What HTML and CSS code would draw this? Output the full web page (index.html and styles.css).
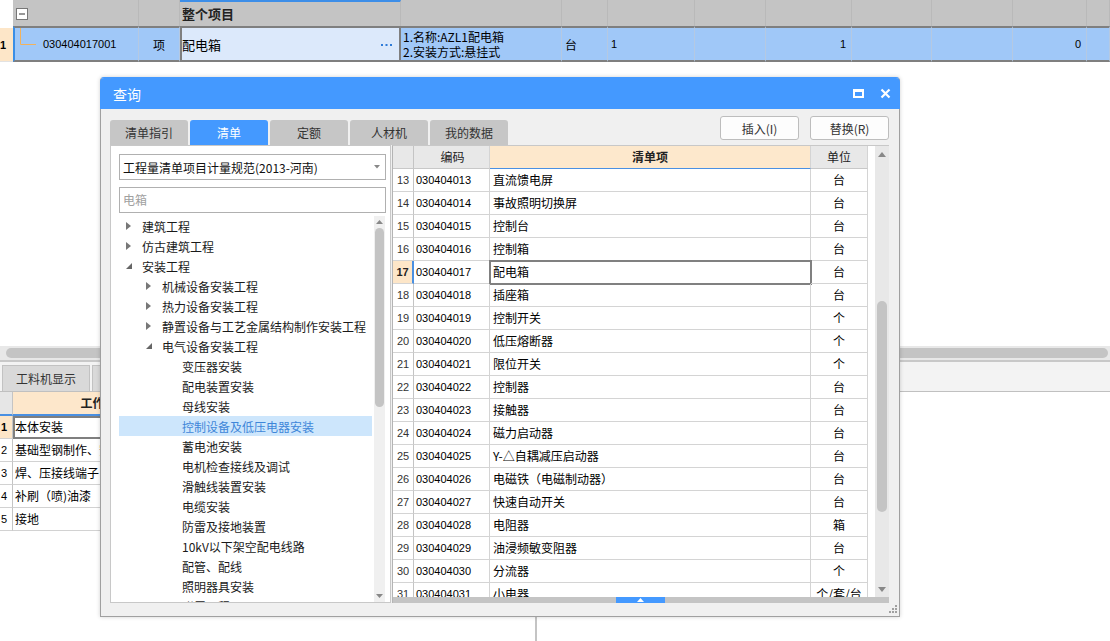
FILE: index.html
```html
<!DOCTYPE html>
<html lang="zh-CN">
<head>
<meta charset="utf-8">
<title>查询</title>
<link rel="stylesheet" href="styles.css">
</head>
<body>
<div class="app">
  <section class="top-grid">
    <div class="tg-row tg-head">
      <div class="tc tc-blank"></div>
      <div class="tc tc-tog"><svg class="minus" width="12" height="12" viewBox="0 0 12 12"><rect x="0.5" y="0.5" width="11" height="11" fill="#fff" stroke="#777"/><rect x="3" y="5.5" width="6" height="1" fill="#333"/></svg></div>
      <div class="tc"></div>
      <div class="tc tc-title">整个项目</div>
      <div class="tc"></div>
      <div class="tc"></div>
      <div class="tc"></div>
      <div class="tc"></div>
      <div class="tc"></div>
      <div class="tc"></div>
      <div class="tc"></div>
      <div class="tc"></div>
      <div class="tc"></div>
    </div>
    <div class="tg-row tg-item">
      <div class="tc ti-num">1</div>
      <div class="tc ti-code"><svg class="tree-line" width="16" height="17" viewBox="0 0 16 17"><path d="M0.5 0V16.5H16" fill="none" stroke="#f2b25c" stroke-width="1"/></svg><span class="mono">030404017001</span></div>
      <div class="tc ti-unit">项</div>
      <div class="tc ti-name"><span>配电箱</span><svg class="dots" width="11" height="3" viewBox="0 0 11 3"><rect x="0" y="0" width="2" height="2" fill="#2e7bd8"/><rect x="4.5" y="0" width="2" height="2" fill="#2e7bd8"/><rect x="9" y="0" width="2" height="2" fill="#2e7bd8"/></svg></div>
      <div class="tc ti-feat"><span>1.名称:AZL1配电箱</span><span>2.安装方式:悬挂式</span></div>
      <div class="tc ti-txt">台</div>
      <div class="tc ti-txt mono">1</div>
      <div class="tc"></div>
      <div class="tc ti-r mono">1</div>
      <div class="tc"></div>
      <div class="tc"></div>
      <div class="tc ti-r mono">0</div>
      <div class="tc"></div>
    </div>
    <div class="tg-space"></div>
    <div class="hscroll"><div class="hthumb"></div></div>
  </section>

  <section class="bottom">
    <div class="btabs">
      <div class="btab">工料机显示</div>
      <div class="btab">单价构成</div>
    </div>
    <div class="bsplit">
      <div class="bgrid">
        <div class="bg-row bg-head">
          <div class="bc bc-num"></div>
          <div class="bc bc-title">工作内容</div>
          <div class="bc"></div>
        </div>
        <div class="bg-row">
          <div class="bc bc-num sel">1</div>
          <div class="bc bc-sel">本体安装</div>
          <div class="bc"></div>
        </div>
        <div class="bg-row">
          <div class="bc bc-num">2</div>
          <div class="bc">基础型钢制作、安装</div>
          <div class="bc"></div>
        </div>
        <div class="bg-row">
          <div class="bc bc-num">3</div>
          <div class="bc">焊、压接线端子</div>
          <div class="bc"></div>
        </div>
        <div class="bg-row">
          <div class="bc bc-num">4</div>
          <div class="bc">补刷（喷)油漆</div>
          <div class="bc"></div>
        </div>
        <div class="bg-row">
          <div class="bc bc-num">5</div>
          <div class="bc">接地</div>
          <div class="bc"></div>
        </div>
      </div>
      <div class="bsplitter"></div>
      <div class="bright"></div>
    </div>
  </section>

  <div class="dialog">
    <div class="dlg-title">
      <span class="dlg-name">查询</span>
      <div class="dlg-ctrls">
        <svg width="11" height="9" viewBox="0 0 11 9"><rect x="1" y="1" width="9" height="7" fill="none" stroke="#fff" stroke-width="2"/><rect x="0" y="0" width="11" height="3" fill="#fff"/></svg>
        <svg width="11" height="11" viewBox="0 0 11 11"><path d="M1.5 1.5L9.5 9.5M9.5 1.5L1.5 9.5" stroke="#fff" stroke-width="2.2"/></svg>
      </div>
    </div>
    <div class="dlg-body">
      <div class="dlg-toolbar">
        <div class="tabs">
          <div class="tab">清单指引</div>
          <div class="tab active">清单</div>
          <div class="tab">定额</div>
          <div class="tab">人材机</div>
          <div class="tab">我的数据</div>
        </div>
        <div class="btns">
          <button class="btn">插入(I)</button>
          <button class="btn">替换(R)</button>
        </div>
      </div>
      <div class="dlg-content">
        <div class="lpanel">
          <div class="select"><span>工程量清单项目计量规范(2013-河南)</span><svg width="6" height="4" viewBox="0 0 6 4"><path d="M0 0H6L3 3.5Z" fill="#888"/></svg></div>
          <div class="search">电箱</div>
          <div class="tree-wrap">
            <ul class="tree">
              <li class="l0"><span class="arr"><svg width="5" height="8" viewBox="0 0 5 8"><path d="M0 0L5 4L0 8Z" fill="#777"/></svg></span>建筑工程</li>
              <li class="l0"><span class="arr"><svg width="5" height="8" viewBox="0 0 5 8"><path d="M0 0L5 4L0 8Z" fill="#777"/></svg></span>仿古建筑工程</li>
              <li class="l0"><span class="arr"><svg width="6" height="6" viewBox="0 0 6 6"><path d="M6 0V6H0Z" fill="#666"/></svg></span>安装工程</li>
              <li class="l1"><span class="arr"><svg width="5" height="8" viewBox="0 0 5 8"><path d="M0 0L5 4L0 8Z" fill="#777"/></svg></span>机械设备安装工程</li>
              <li class="l1"><span class="arr"><svg width="5" height="8" viewBox="0 0 5 8"><path d="M0 0L5 4L0 8Z" fill="#777"/></svg></span>热力设备安装工程</li>
              <li class="l1"><span class="arr"><svg width="5" height="8" viewBox="0 0 5 8"><path d="M0 0L5 4L0 8Z" fill="#777"/></svg></span>静置设备与工艺金属结构制作安装工程</li>
              <li class="l1"><span class="arr"><svg width="6" height="6" viewBox="0 0 6 6"><path d="M6 0V6H0Z" fill="#666"/></svg></span>电气设备安装工程</li>
              <li class="l2"><span class="arr"></span>变压器安装</li>
              <li class="l2"><span class="arr"></span>配电装置安装</li>
              <li class="l2"><span class="arr"></span>母线安装</li>
              <li class="l2 hl"><span class="arr"></span>控制设备及低压电器安装</li>
              <li class="l2"><span class="arr"></span>蓄电池安装</li>
              <li class="l2"><span class="arr"></span>电机检查接线及调试</li>
              <li class="l2"><span class="arr"></span>滑触线装置安装</li>
              <li class="l2"><span class="arr"></span>电缆安装</li>
              <li class="l2"><span class="arr"></span>防雷及接地装置</li>
              <li class="l2"><span class="arr"></span>10kV以下架空配电线路</li>
              <li class="l2"><span class="arr"></span>配管、配线</li>
              <li class="l2"><span class="arr"></span>照明器具安装</li>
              <li class="l2"><span class="arr"></span>附属工程</li>
            </ul>
            <div class="vscroll tree-scroll">
              <div class="sarrow"><svg width="7" height="4" viewBox="0 0 7 4"><path d="M0 4L3.5 0L7 4Z" fill="#888"/></svg></div>
              <div class="sthumb"></div>
              <div class="sfill"></div>
              <div class="sarrow"><svg width="7" height="4" viewBox="0 0 7 4"><path d="M0 0H7L3.5 4Z" fill="#888"/></svg></div>
            </div>
          </div>
        </div>
        <div class="rpanel">
          <div class="table-area">
            <div class="tbl">
              <div class="tr th">
                <div class="td n"></div>
                <div class="td c">编码</div>
                <div class="td nm">清单项</div>
                <div class="td u">单位</div>
              </div>
              <div class="tr"><div class="td n">13</div><div class="td c">030404013</div><div class="td nm">直流馈电屏</div><div class="td u">台</div></div>
              <div class="tr"><div class="td n">14</div><div class="td c">030404014</div><div class="td nm">事故照明切换屏</div><div class="td u">台</div></div>
              <div class="tr"><div class="td n">15</div><div class="td c">030404015</div><div class="td nm">控制台</div><div class="td u">台</div></div>
              <div class="tr"><div class="td n">16</div><div class="td c">030404016</div><div class="td nm">控制箱</div><div class="td u">台</div></div>
              <div class="tr cur"><div class="td n">17</div><div class="td c">030404017</div><div class="td nm">配电箱</div><div class="td u">台</div></div>
              <div class="tr"><div class="td n">18</div><div class="td c">030404018</div><div class="td nm">插座箱</div><div class="td u">台</div></div>
              <div class="tr"><div class="td n">19</div><div class="td c">030404019</div><div class="td nm">控制开关</div><div class="td u">个</div></div>
              <div class="tr"><div class="td n">20</div><div class="td c">030404020</div><div class="td nm">低压熔断器</div><div class="td u">个</div></div>
              <div class="tr"><div class="td n">21</div><div class="td c">030404021</div><div class="td nm">限位开关</div><div class="td u">个</div></div>
              <div class="tr"><div class="td n">22</div><div class="td c">030404022</div><div class="td nm">控制器</div><div class="td u">台</div></div>
              <div class="tr"><div class="td n">23</div><div class="td c">030404023</div><div class="td nm">接触器</div><div class="td u">台</div></div>
              <div class="tr"><div class="td n">24</div><div class="td c">030404024</div><div class="td nm">磁力启动器</div><div class="td u">台</div></div>
              <div class="tr"><div class="td n">25</div><div class="td c">030404025</div><div class="td nm">Y-△自耦减压启动器</div><div class="td u">台</div></div>
              <div class="tr"><div class="td n">26</div><div class="td c">030404026</div><div class="td nm">电磁铁（电磁制动器）</div><div class="td u">台</div></div>
              <div class="tr"><div class="td n">27</div><div class="td c">030404027</div><div class="td nm">快速自动开关</div><div class="td u">台</div></div>
              <div class="tr"><div class="td n">28</div><div class="td c">030404028</div><div class="td nm">电阻器</div><div class="td u">箱</div></div>
              <div class="tr"><div class="td n">29</div><div class="td c">030404029</div><div class="td nm">油浸频敏变阻器</div><div class="td u">台</div></div>
              <div class="tr"><div class="td n">30</div><div class="td c">030404030</div><div class="td nm">分流器</div><div class="td u">个</div></div>
              <div class="tr"><div class="td n">31</div><div class="td c">030404031</div><div class="td nm">小电器</div><div class="td u">个/套/台</div></div>
            </div>
            <div class="tbl-gap"></div>
            <div class="vscroll tbl-scroll">
              <div class="sarrow big"><svg width="8" height="5" viewBox="0 0 8 5"><path d="M0 5L4 0L8 5Z" fill="#888"/></svg></div>
              <div class="sfill top"></div>
              <div class="sthumb"></div>
              <div class="sfill"></div>
              <div class="sarrow big"><svg width="8" height="5" viewBox="0 0 8 5"><path d="M0 0H8L4 5Z" fill="#888"/></svg></div>
            </div>
          </div>
          <div class="splitbar"><span class="splitbtn"><svg width="7" height="4" viewBox="0 0 7 4"><path d="M0 4L3.5 0L7 4Z" fill="#fff"/></svg></span></div>
        </div>
      </div>
    </div>
    <svg class="grip" width="8" height="8" viewBox="0 0 8 8"><rect x="6" y="0" width="2" height="2" fill="#a0a0a0"/><rect x="3" y="3" width="2" height="2" fill="#a0a0a0"/><rect x="6" y="3" width="2" height="2" fill="#a0a0a0"/><rect x="0" y="6" width="2" height="2" fill="#a0a0a0"/><rect x="3" y="6" width="2" height="2" fill="#a0a0a0"/><rect x="6" y="6" width="2" height="2" fill="#a0a0a0"/></svg>
  </div>
</div>
</body>
</html>
```

FILE: styles.css
```css
* { box-sizing: border-box; margin: 0; padding: 0; }
html, body { width: 1110px; height: 641px; overflow: hidden; background: #fff; }
body {
  font-family: "Noto Sans CJK SC", "Noto Sans", sans-serif;
  font-size: 12px;
  color: #000;
}
.app {
  position: relative;
  width: 1110px;
  height: 641px;
  overflow: hidden;
  display: flex;
  flex-direction: column;
}
.mono { font-family: "Liberation Sans", "Noto Sans CJK SC", sans-serif; font-size: 11px; }

/* ---------- top grid ---------- */
.top-grid { height: 360px; display: flex; flex-direction: column; }
.tg-row {
  display: grid;
  grid-template-columns: 13px 126px 41px 221px 161px 46px 87px 71px 86px 80px 81px 74px 1fr;
}
.tg-head { height: 26px; }
.tg-head .tc { background: #c4c4c4; border-right: 1px solid #b9b9b9; }
.tg-head .tc-blank { background: #fff; border-right: none; }
.tc-tog { padding: 8px 0 0 3px; }
.minus { display: block; }
.tc-title {
  border-top: 2px solid #3d8ee8;
  font-weight: bold;
  font-size: 13px;
  line-height: 23px;
  padding-left: 2px;
  color: #222;
}
.tg-item { height: 36px; }
.tg-item .tc {
  background: #a0c8f8;
  border-top: 2px solid #7f7f7f;
  border-bottom: 2px solid #7f7f7f;
  border-right: 1px solid #b5c9e2;
  display: flex;
  align-items: center;
  overflow: hidden;
  white-space: nowrap;
}
.tg-item .ti-num {
  background: #fde6c8;
  border-top: 2px solid #fff;
  border-bottom: 1px solid #e2e2e2;
  border-right: none;
  font-family: "Liberation Sans", sans-serif;
  font-weight: bold;
  font-size: 11px;
  padding-left: 0;
}
.tg-item .ti-code { border-left: 2px solid #3a8ee6; align-items: flex-start; }
.tree-line { display: block; flex: none; margin-left: 5px; }
.ti-code .mono { margin-left: 7px; align-self: center; }
.tg-item .ti-unit { justify-content: center; }
.tg-item .ti-name {
  background: #dce9fb;
  border-left: 2px solid #7f7f7f;
  border-right: 2px solid #7f7f7f;
  justify-content: space-between;
  padding-left: 0;
  font-size: 13px;
}
.dots { display: block; margin-right: 7px; margin-top: 2px; }
.tg-item .ti-feat {
  flex-direction: column;
  align-items: flex-start;
  justify-content: center;
  line-height: 15px;
  padding-left: 2px;
}
.tg-item .ti-txt { padding-left: 3px; }
.tg-item .ti-r { justify-content: flex-end; padding-right: 5px; }
.tg-space { flex: 1; }
.hscroll {
  height: 14px;
  background: #e8e8e8;
  padding: 2px 2px 2px 6px;
}
.hthumb { height: 10px; background: #c4c4c4; border-radius: 5px; }

/* ---------- bottom pane ---------- */
.bottom {
  flex: 1;
  display: flex;
  flex-direction: column;
  border-top: 2px solid #c8c8c8;
}
.btabs {
  height: 30px;
  background: #f3f3f3;
  border-bottom: 1px solid #c0c0c0;
  display: flex;
  align-items: flex-end;
  gap: 2px;
  padding-left: 2px;
}
.btab {
  width: 88px;
  height: 26px;
  background: #d9d9d9;
  border: 1px solid #c2c2c2;
  border-bottom: none;
  text-align: center;
  line-height: 25px;
  color: #333;
}
.bsplit { flex: 1; display: flex; }
.bgrid { width: 535px; }
.bg-row {
  display: grid;
  grid-template-columns: 13px 182px 1fr;
  height: 23px;
}
.bc {
  border-right: 1px solid #d2d2d2;
  border-bottom: 1px solid #d2d2d2;
  line-height: 22px;
  padding-left: 2px;
  white-space: nowrap;
  overflow: hidden;
}
.bg-head { height: 24px; }
.bg-head .bc {
  background: #fde7cb;
  border-bottom: 2px solid #4a90e2;
  font-weight: bold;
  text-align: center;
  color: #222;
}
.bg-head .bc-num { background: #e6e6e6; }
.bc-num {
  font-family: "Liberation Sans", sans-serif;
  font-size: 11px;
  padding-left: 1px;
  border-right: 1px solid #c4c4c4;
}
.bc-num.sel { background: #fde6c8; font-weight: bold; }
.bc-sel { outline: 2px solid #7f7f7f; outline-offset: -2px; }
.bsplitter { width: 2px; background: #c4c4c4; }
.bright { flex: 1; background: #fff; }

/* ---------- dialog ---------- */
.dialog {
  position: absolute;
  left: 100px;
  top: 77px;
  width: 800px;
  height: 540px;
  border: 1px solid #a0a0a0;
  border-top-color: #4499ff;
  border-radius: 4px 4px 0 0;
  background: #f0f0f0;
  display: flex;
  flex-direction: column;
  box-shadow: 0 0 4px rgba(0, 0, 0, 0.18);
}
.dlg-title {
  height: 31px;
  margin: 0 -1px;
  background: #4499ff;
  border-radius: 4px 4px 0 0;
  color: #fff;
  display: flex;
  align-items: center;
  justify-content: space-between;
  padding: 0 9px 0 13px;
}
.dlg-name { font-size: 14px; }
.dlg-ctrls { display: flex; align-items: center; gap: 16px; }
.dlg-ctrls svg { display: block; }
.dlg-body {
  flex: 1;
  display: flex;
  flex-direction: column;
  padding: 7px 10px 13px 9px;
}
.dlg-toolbar {
  height: 29px;
  display: flex;
  justify-content: space-between;
}
.tabs { display: flex; gap: 2px; align-self: flex-end; }
.tab {
  width: 78px;
  height: 25px;
  background: #c6c6c6;
  border-radius: 3px 3px 0 0;
  text-align: center;
  line-height: 25px;
  color: #333;
}
.tab.active { background: #4499ff; color: #fff; }
.btns { display: flex; gap: 11px; align-items: flex-start; }
.btn {
  width: 79px;
  height: 24px;
  background: #fdfdfd;
  border: 1px solid #bdbdbd;
  border-radius: 3px;
  font-family: inherit;
  font-size: 12px;
  color: #333;
}
.dlg-content { height: 458px; display: flex; gap: 1px; }

.lpanel {
  width: 281px;
  background: #fff;
  border: 1px solid #c8c8c8;
  padding: 8px 4px 0 8px;
  display: flex;
  flex-direction: column;
}
.select {
  height: 26px;
  border: 1px solid #b0b0b0;
  display: flex;
  align-items: center;
  justify-content: space-between;
  padding: 0 5px 0 3px;
  color: #111;
}
.select svg { display: block; }
.search {
  margin-top: 7px;
  height: 26px;
  border: 1px solid #b0b0b0;
  padding-left: 3px;
  line-height: 24px;
  color: #a0a0a0;
}
.tree-wrap {
  margin-top: 3px;
  flex: 1;
  min-height: 0;
  display: flex;
  overflow: hidden;
}
.tree { list-style: none; width: 253px; flex: none; }
.tree li {
  height: 20px;
  display: flex;
  align-items: center;
  white-space: nowrap;
  color: #1a1a1a;
}
.tree .l0 { padding-left: 7px; }
.tree .l1 { padding-left: 27px; }
.tree .l2 { padding-left: 47px; }
.tree .arr { width: 16px; flex: none; display: flex; align-items: center; }
.tree .arr svg { display: block; }
.tree li.hl { background: #cde6fc; color: #3f86d9; }

.vscroll { display: flex; flex-direction: column; }
.tree-scroll {
  width: 11px;
  margin-left: 2px;
  background: #f0f0f0;
}
.sarrow { height: 12px; display: flex; align-items: center; justify-content: center; flex: none; }
.sarrow svg { display: block; }
.sthumb { background: #c4c4c4; border-radius: 5px; flex: none; }
.sfill { flex: 1; }
.tree-scroll .sthumb { height: 179px; margin: 0 1px; }

.rpanel {
  flex: 1;
  display: flex;
  flex-direction: column;
  border-left: 1px solid #b4b4b4;
  border-top: 1px solid #c8c8c8;
  background: #fff;
}
.table-area { flex: 1; min-height: 0; display: flex; overflow: hidden; }
.tbl { width: 475px; flex: none; }
.tr {
  display: grid;
  grid-template-columns: 21px 76px 321px 57px;
  height: 23px;
}
.td {
  border-right: 1px solid #d4d4d4;
  border-bottom: 1px solid #d4d4d4;
  line-height: 22px;
  white-space: nowrap;
  overflow: hidden;
}
.td.n {
  font-family: "Liberation Sans", sans-serif;
  font-size: 11px;
  text-align: center;
  color: #333;
  border-right-color: #c4c4c4;
}
.td.c { font-family: "Liberation Sans", sans-serif; font-size: 11px; padding-left: 2px; }
.td.nm { padding-left: 3px; }
.td.u { text-align: center; }
.th .td { background: #e8e8e8; border-bottom-color: #c8c8c8; text-align: center; font-family: "Noto Sans CJK SC", sans-serif; font-size: 12px; color: #222; }
.th .td.nm { background: #fde8cc; font-weight: bold; border-bottom: 1px solid #4a90e2; padding-left: 0; }
.tr.cur .td.n { background: #fde6c8; font-weight: bold; border-right: 2px solid #4a90e2; color: #222; }
.tr.cur .td.nm { outline: 2px solid #808080; outline-offset: -1px; }
.tbl-gap { width: 7px; flex: none; }
.tbl-scroll { width: 14px; background: #e8e8e8; flex: none; }
.sarrow.big { height: 16px; }
.tbl-scroll .sfill.top { flex: none; height: 139px; }
.tbl-scroll .sthumb { height: 211px; margin: 0 2px; }
.splitbar {
  height: 6px;
  background: #c4c4c4;
  display: flex;
  padding-left: 223px;
}
.splitbtn {
  width: 49px;
  height: 6px;
  background: #4499ff;
  display: flex;
  align-items: center;
  justify-content: center;
}
.splitbtn svg { display: block; }
.grip { position: absolute; right: 2px; bottom: 3px; display: block; }
```
